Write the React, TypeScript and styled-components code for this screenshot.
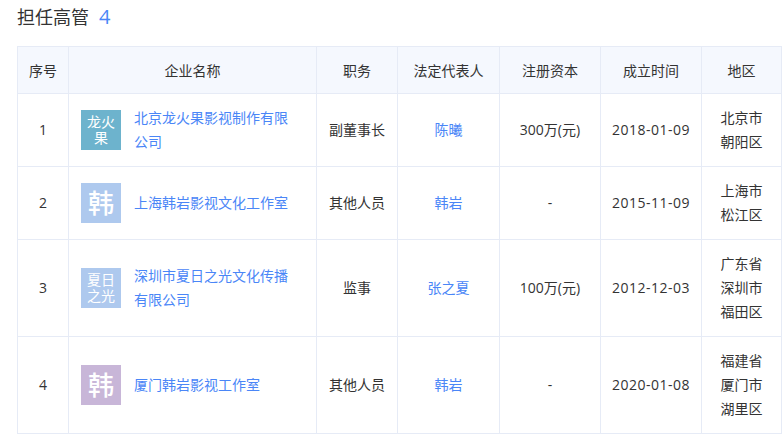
import React from "react";
import styled, { createGlobalStyle } from "styled-components";

const GlobalStyle = createGlobalStyle`
  html, body {
    margin: 0;
    padding: 0;
    background: #fff;
    overflow: hidden;
  }
  body {
    font-family: "Open Sans", "Noto Sans CJK SC", sans-serif;
    color: #333;
  }
`;

const Page = styled.div`
  width: 782px;
  height: 446px;
  padding: 0 0 0 17px;
  box-sizing: border-box;
`;

const Heading = styled.div`
  display: flex;
  align-items: center;
  gap: 10px;
  height: 46px;
  padding-bottom: 14px;
  box-sizing: border-box;
  font-size: 18px;
  color: #333;
`;

const Count = styled.span`
  color: #4a86f7;
  font-size: 20px;
`;

const Table = styled.table`
  width: 764px;
  table-layout: fixed;
  border-collapse: collapse;
  font-size: 14px;
`;

const HeadCell = styled.th`
  height: 46px;
  padding: 0;
  font-weight: 400;
  text-align: center;
  background: #f5f8fe;
  border: 1px solid #e6ebf6;
`;

const Cell = styled.td`
  padding: 0;
  text-align: center;
  line-height: 24px;
  border: 1px solid #e6ebf6;
`;

const DateCell = styled(Cell)`
  letter-spacing: 0.5px;
`;

const Row = styled.tr<{ $height: number }>`
  height: ${(p) => p.$height}px;
`;

const Company = styled.div`
  display: flex;
  align-items: center;
  gap: 13px;
  padding: 0 12px;
  text-align: left;
`;

const Logo = styled.div<{ $bg: string; $big?: boolean }>`
  flex: none;
  width: 40px;
  height: 40px;
  padding: 0 3px;
  box-sizing: border-box;
  display: flex;
  align-items: center;
  justify-content: center;
  text-align: center;
  color: #fff;
  background: ${(p) => p.$bg};
  font-size: ${(p) => (p.$big ? "26px" : "14px")};
  font-weight: ${(p) => (p.$big ? 500 : 400)};
  line-height: ${(p) => (p.$big ? "40px" : "16px")};
`;

const Name = styled.a`
  width: 156px;
  color: #4a86f7;
  text-decoration: none;
`;

const Link = styled.a`
  color: #4a86f7;
  text-decoration: none;
`;

const columns = [
  { label: "序号", width: 51 },
  { label: "企业名称", width: 248 },
  { label: "职务", width: 81 },
  { label: "法定代表人", width: 102 },
  { label: "注册资本", width: 101 },
  { label: "成立时间", width: 101 },
  { label: "地区", width: 80 },
];

const rows = [
  {
    id: 1,
    height: 73,
    logo: "龙火果",
    color: "#6db3cd",
    name: "北京龙火果影视制作有限公司",
    role: "副董事长",
    person: "陈曦",
    capital: "300万(元)",
    date: "2018-01-09",
    area: ["北京市", "朝阳区"],
  },
  {
    id: 2,
    height: 73,
    logo: "韩",
    color: "#aec9ee",
    name: "上海韩岩影视文化工作室",
    role: "其他人员",
    person: "韩岩",
    capital: "-",
    date: "2015-11-09",
    area: ["上海市", "松江区"],
  },
  {
    id: 3,
    height: 97,
    logo: "夏日之光",
    color: "#aec9ee",
    name: "深圳市夏日之光文化传播有限公司",
    role: "监事",
    person: "张之夏",
    capital: "100万(元)",
    date: "2012-12-03",
    area: ["广东省", "深圳市", "福田区"],
  },
  {
    id: 4,
    height: 97,
    logo: "韩",
    color: "#c8b6d8",
    name: "厦门韩岩影视工作室",
    role: "其他人员",
    person: "韩岩",
    capital: "-",
    date: "2020-01-08",
    area: ["福建省", "厦门市", "湖里区"],
  },
];

export default function App() {
  return (
    <Page>
      <GlobalStyle />
      <Heading>
        担任高管 <Count>4</Count>
      </Heading>
      <Table>
        <colgroup>
          {columns.map((c) => (
            <col key={c.label} width={c.width} />
          ))}
        </colgroup>
        <thead>
          <tr>
            {columns.map((c) => (
              <HeadCell key={c.label}>{c.label}</HeadCell>
            ))}
          </tr>
        </thead>
        <tbody>
          {rows.map((r) => (
            <Row key={r.id} $height={r.height}>
              <Cell>{r.id}</Cell>
              <Cell>
                <Company>
                  <Logo $bg={r.color} $big={r.logo.length === 1}>
                    {r.logo}
                  </Logo>
                  <Name href="#">{r.name}</Name>
                </Company>
              </Cell>
              <Cell>{r.role}</Cell>
              <Cell>
                <Link href="#">{r.person}</Link>
              </Cell>
              <Cell>{r.capital}</Cell>
              <DateCell>{r.date}</DateCell>
              <Cell>
                {r.area.map((a) => (
                  <div key={a}>{a}</div>
                ))}
              </Cell>
            </Row>
          ))}
        </tbody>
      </Table>
    </Page>
  );
}
